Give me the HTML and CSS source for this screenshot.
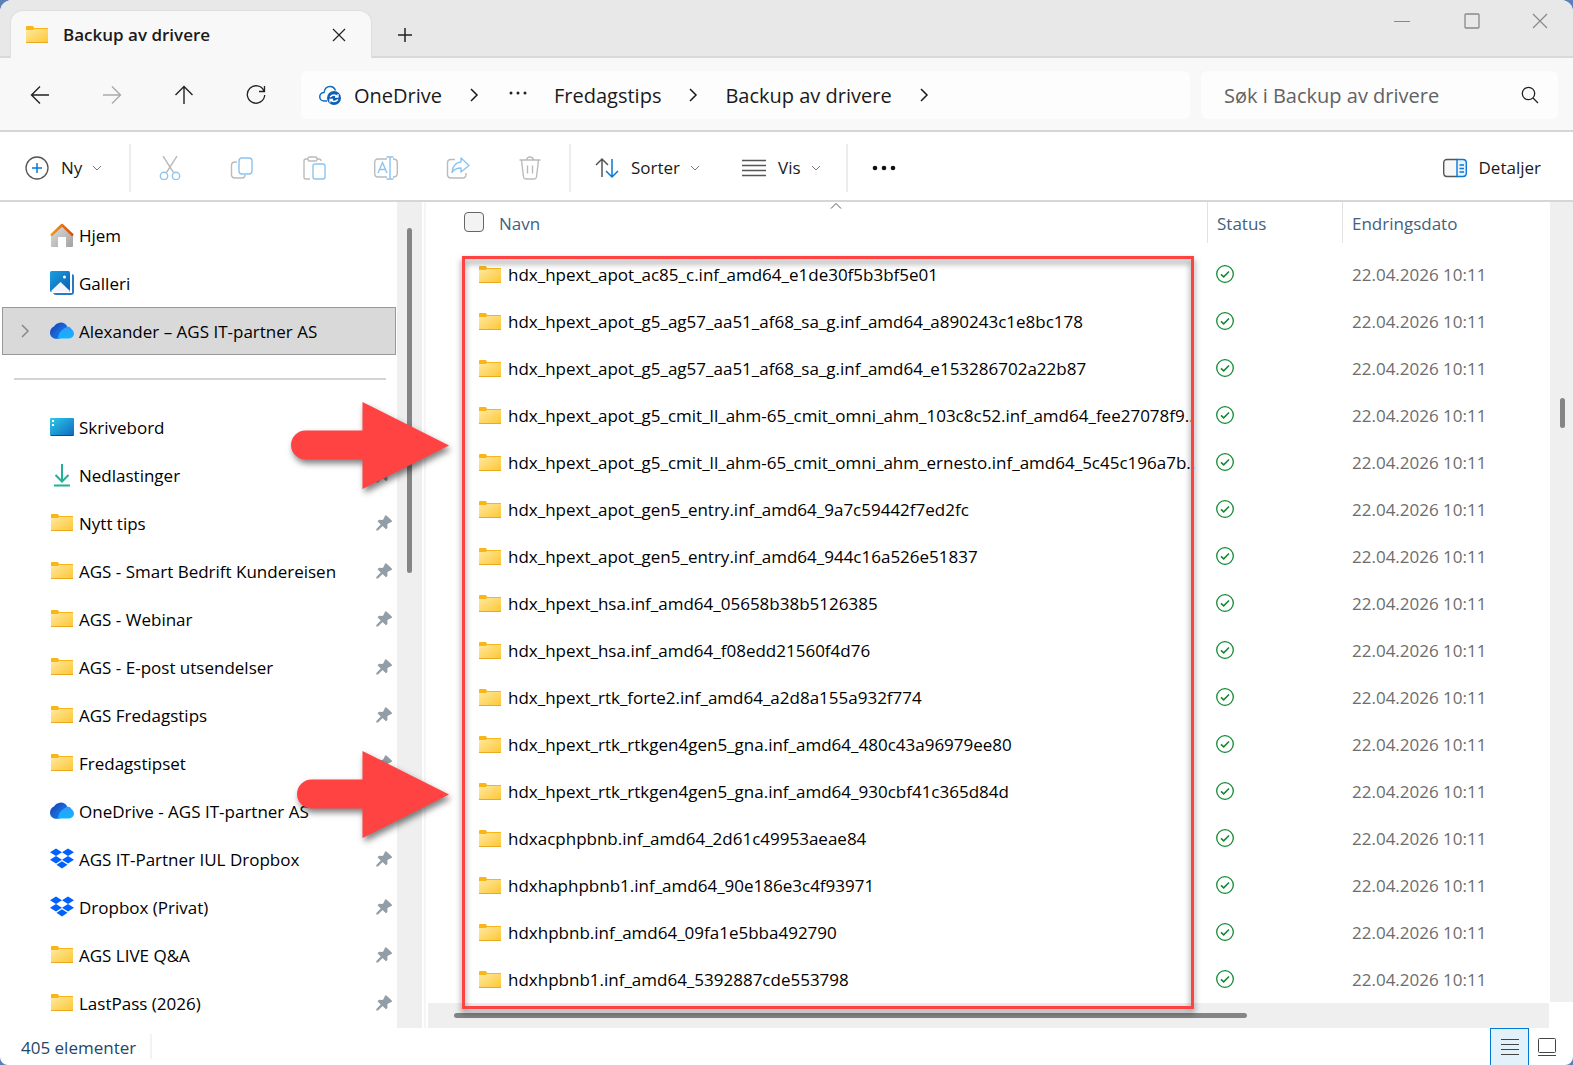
FILE: index.html
```html
<!DOCTYPE html>
<html lang="nb">
  <head>
    <meta charset="UTF-8" />
    <meta name="viewport" content="width=device-width, initial-scale=1.0" />
    <title>Backup av drivere</title>
    <link rel="stylesheet" href="styles.css">
  </head>
  <body>
    <!-- shared icons -->
    <svg class="sprite" aria-hidden="true">
      <defs>
        <linearGradient id="gFolder" x1="0" y1="0" x2="1" y2="1">
          <stop offset="0" stop-color="#ffe8a0" />
          <stop offset="1" stop-color="#fdc732" />
        </linearGradient>
        <linearGradient id="gBlue" x1="0" y1="0" x2="1" y2="1">
          <stop offset="0" stop-color="#1ba0e2" />
          <stop offset="1" stop-color="#0a5bb0" />
        </linearGradient>
        <linearGradient id="gDesk" x1="0" y1="0" x2="1" y2="1">
          <stop offset="0" stop-color="#30c9e8" />
          <stop offset="1" stop-color="#0c68c0" />
        </linearGradient>
        <linearGradient id="gHome" x1="0" y1="0" x2="1" y2="1">
          <stop offset="0" stop-color="#dedede" />
          <stop offset="1" stop-color="#a2a2a2" />
        </linearGradient>
        <linearGradient id="gRoof" x1="0" y1="0" x2="1" y2="0">
          <stop offset="0" stop-color="#f39a1c" />
          <stop offset="1" stop-color="#d84e0c" />
        </linearGradient>
        <linearGradient id="gCloud" x1="0" y1="0" x2="0" y2="1">
          <stop offset="0" stop-color="#2f9bf7" />
          <stop offset="1" stop-color="#12b4ff" />
        </linearGradient>
        <linearGradient id="gCloudDark" x1="0" y1="0" x2="1" y2="1">
          <stop offset="0" stop-color="#0d3fae" />
          <stop offset="1" stop-color="#2d86f5" />
        </linearGradient>
      </defs>
      <symbol id="folder" viewBox="0 0 24 24">
        <path fill="#f9b616" d="M1 4a1 1 0 0 1 1-1h6l1 2h14v2H1z" />
        <path fill="url(#gFolder)" d="M1 7h7l1-1h14v14H1z" />
        <path fill="#eba921" d="M1 19h22v1H1z" />
      </symbol>
      <symbol id="home" viewBox="0 0 24 24">
        <path fill="url(#gHome)" d="M1 12 12 3l11 9v11q0 1-1 1h-6v-10H8v10H2q-1 0-1-1z" />
        <path fill="none" stroke="url(#gRoof)" stroke-width="2.500" stroke-linejoin="round" d="M1 12.500 12 2l11 10.500" />
      </symbol>
      <symbol id="gallery" viewBox="0 0 24 24">
        <path fill="#2a78c8" d="M21 3q3 0 3 2v16q0 3-3 3H6q-2 0-3-2h17q1 0 1-1z" />
        <path fill="#fff" d="M20 2h2v20H2v-2h18z" />
        <rect width="20" height="21" rx="1.500" fill="url(#gBlue)" />
        <path fill="#f0f6ff" d="m1 20 9.500-9L20 20l-1 1H2z" />
        <circle cx="14.500" cy="6" r="1.500" fill="#fff" />
      </symbol>
      <symbol id="cloud" viewBox="0 0 24 24">
        <path fill="url(#gCloudDark)" d="M5 19.500A5.500 5.500 0 0 1 0 14Q0 9 4 7.500q2-3.500 7-4Q15 3.500 17 7L9 19.500z" />
        <path fill="#1768e0" d="M3.500 19Q5 12 11 8.500q4-2.500 7-.500L10 19.500H5z" />
        <path fill="url(#gCloud)" d="M8 19.500q0-6 6-10Q19 6 21.500 10q2.500 2 2.500 4.500a5 5 0 0 1-5 5z" />
      </symbol>
      <symbol id="desktop" viewBox="0 0 24 24">
        <rect y="3" width="24" height="18" rx="1" fill="url(#gDesk)" />
        <path fill="#fff" d="M2 5h2v2H2zM2 9h2v2H2z" />
        <path fill="#0a4a94" d="M1 20h22v1H1z" />
      </symbol>
      <symbol id="download" viewBox="0 0 24 24">
        <path fill="none" stroke="#22b096" stroke-width="2" d="M12 1v17M5.500 12l6.500 6.500 6.500-6.500M4 22.500h16" />
      </symbol>
      <symbol id="dropbox" viewBox="0 0 24 24">
        <path fill="#0061fe" d="M6 1.500l6 3.750L6 9 0 5.250zM18 1.500l6 3.750L18 9l-6-3.750zM6 9l6 3.750-6 3.750-6-3.750zM18 9l6 3.750-6 3.750-6-3.750zM12 14.200l5.500 3.600L12 21.500l-5.500-3.700z" />
      </symbol>
      <symbol id="pin" viewBox="0 0 16 16">
        <path fill="#929da6" d="M9 .7q.8-.9 1.700 0l4.800 4.600q.9.800 0 1.700l-3.300 1.500-.9 1 .2 3.500-1.500 1.300L6.500 11 2 15.500H.3V14l4.500-4.500L1.500 6.200 3 4.700l3.500.2 1-1z" />
      </symbol>
      <symbol id="chevdown" viewBox="0 0 10 10">
        <path fill="none" stroke="#777" stroke-width="1" d="m1 3 4 4 4-4" />
      </symbol>
      <symbol id="chevright" viewBox="0 0 10 14">
        <path fill="none" stroke="currentColor" stroke-width="1.500" d="m2 1 6 6-6 6" />
      </symbol>
      <symbol id="synced" viewBox="0 0 18 18">
        <circle cx="9" cy="9" r="8.300" fill="none" stroke="#128a33" stroke-width="1.300" />
        <path fill="none" stroke="#128a33" stroke-width="1.600" d="m5 9.300 2.700 2.600L13 6.500" />
      </symbol>
    </svg>

    <div class="window">
      <header class="titlebar">
        <div class="tab">
          <svg class="icon"><use href="#folder" /></svg>
          <span class="tab-title">Backup av drivere</span>
          <button class="plain" aria-label="Lukk fane">
            <svg width="14" height="14" fill="none" stroke="#222" stroke-width="1.200"><path d="m1 1 12 12M13 1 1 13" /></svg>
          </button>
        </div>
        <button class="plain new-tab" aria-label="Ny fane">
          <svg width="16" height="16" fill="none" stroke="#222" stroke-width="1.500"><path d="M8 1v14M1 8h14" /></svg>
        </button>
        <div class="window-buttons">
          <button class="plain" aria-label="Minimer">
            <svg width="16" height="16" fill="none" stroke="#888"><path d="M0 8.500h16" /></svg>
          </button>
          <button class="plain" aria-label="Maksimer">
            <svg width="16" height="16" fill="none" stroke="#888" stroke-width="1.300"><rect x="1" y="1" width="14" height="14" rx="1" /></svg>
          </button>
          <button class="plain" aria-label="Lukk">
            <svg width="16" height="16" fill="none" stroke="#888" stroke-width="1.200"><path d="m1 1 14 14M15 1 1 15" /></svg>
          </button>
        </div>
      </header>

      <nav class="navbar">
        <div class="nav-buttons">
          <button class="plain" aria-label="Tilbake">
            <svg width="20" height="20" fill="none" stroke="#222" stroke-width="1.400"><path d="M19 10H1.500M10 1.500 1.500 10l8.500 8.500" /></svg>
          </button>
          <button class="plain" aria-label="Frem" disabled>
            <svg width="20" height="20" fill="none" stroke="#aaa" stroke-width="1.400"><path d="M1 10h17.500M10 1.500l8.500 8.500-8.500 8.500" /></svg>
          </button>
          <button class="plain" aria-label="Opp">
            <svg width="20" height="20" fill="none" stroke="#222" stroke-width="1.400"><path d="M10 19V1.500M1.500 10 10 1.500l8.500 8.500" /></svg>
          </button>
          <button class="plain" aria-label="Oppdater">
            <svg width="20" height="20" fill="none" stroke="#222" stroke-width="1.300"><path d="M18 6a8.700 8.700 0 1 0 .7 4M18.500 1v5.500H13" /></svg>
          </button>
        </div>
        <div class="address">
          <svg class="onedrive" viewBox="0 0 24 20">
            <path fill="none" stroke="#0f6cbd" stroke-width="1.500" d="M8 16H5A4.200 4.200 0 0 1 5 7.500Q6 1.500 11 1.500q4 0 5.500 4" />
            <circle cx="15" cy="13" r="7" fill="#0f5fb8" />
            <path fill="none" stroke="#fff" stroke-width="1.300" d="M11 12q4-4 8 0m0-3v3h-3M19 14.500q-4 4-8 0m0 3v-3h3" />
          </svg>
          <a href="#">OneDrive</a>
          <svg class="crumb-sep"><use href="#chevright" /></svg>
          <button class="plain crumb-more" aria-label="Flere">
            <svg width="18" height="4" fill="#222"><circle cx="2" cy="2" r="1.500" /><circle cx="9" cy="2" r="1.500" /><circle cx="16" cy="2" r="1.500" /></svg>
          </button>
          <a href="#">Fredagstips</a>
          <svg class="crumb-sep"><use href="#chevright" /></svg>
          <a href="#">Backup av drivere</a>
          <svg class="crumb-sep"><use href="#chevright" /></svg>
        </div>
        <div class="search">
          <input type="text" placeholder="Søk i Backup av drivere" aria-label="Søk i Backup av drivere" />
          <svg width="18" height="18" fill="none" stroke="#222" stroke-width="1.300"><circle cx="7.500" cy="7.500" r="6.200" /><path d="m12 12 5 5" /></svg>
        </div>
      </nav>

      <div class="toolbar">
        <button class="tool tool-new">
          <svg class="icon" viewBox="0 0 24 24" fill="none"><circle cx="12" cy="12" r="11" stroke="#555" stroke-width="1.300" /><path stroke="#0a78d4" stroke-width="1.500" d="M12 7v10M7 12h10" /></svg>
          Ny
          <svg class="chev"><use href="#chevdown" /></svg>
        </button>
        <div class="tool-group">
          <button class="plain" aria-label="Klipp ut" disabled>
            <svg class="icon" viewBox="0 0 24 24" fill="none" stroke-width="1.400"><path stroke="#bbb" d="m5 0 10.500 16.500M19 0 8.500 16.500" /><g stroke="#8cc4f0"><circle cx="6" cy="20" r="3.700" /><circle cx="18" cy="20" r="3.700" /></g></svg>
          </button>
          <button class="plain" aria-label="Kopier" disabled>
            <svg class="icon" viewBox="0 0 24 24" fill="none" stroke-width="1.400"><path stroke="#bbb" d="M7 6H5Q1.500 6 1.500 9.500v9Q1.500 22 5 22h7q3 0 3-3" /><rect x="9" y="2" width="13" height="16" rx="3" stroke="#8cc4f0" /></svg>
          </button>
          <button class="plain" aria-label="Lim inn" disabled>
            <svg class="icon" viewBox="0 0 24 24" fill="none" stroke-width="1.400"><path stroke="#bbb" d="M8 23H4q-2 0-2-2V5q0-2 2-2h2M15 3h2q2 0 2 2" /><rect x="6" y="1" width="9" height="4" rx="1.500" stroke="#bbb" /><rect x="11" y="8" width="12" height="15" rx="2" stroke="#8cc4f0" /></svg>
          </button>
          <button class="plain" aria-label="Gi nytt navn" disabled>
            <svg class="icon" viewBox="0 0 24 24" fill="none" stroke-width="1.400"><path stroke="#bbb" d="M13 3H4Q.7 3 .7 6.500v11Q.7 21 4 21h9M19 3q4.300 0 4.300 3.500v11Q23.300 21 19 21" /><path stroke="#8cc4f0" d="M12.500 1h7M12.500 23h7M16 1v22M4 17l4.500-10.500L13 17M5.500 13.500h6" /></svg>
          </button>
          <button class="plain" aria-label="Del" disabled>
            <svg class="icon" viewBox="0 0 24 24" fill="none" stroke-width="1.400" stroke-linejoin="round"><path stroke="#bbb" d="M9 3.500H5Q1.500 3.500 1.500 7v11.500Q1.500 22 5 22h11.500Q20 22 20 18.500V17" /><path stroke="#8cc4f0" d="m15 2 8 7.500-8 6.500v-4q-6 0-9 4.500Q7 6.500 15 6z" /></svg>
          </button>
          <button class="plain" aria-label="Slett" disabled>
            <svg class="icon" viewBox="0 0 24 24" fill="none" stroke="#bbb" stroke-width="1.400"><path d="M1.500 4h21M8.500 4q.5-3 3.500-3t3.500 3M3.500 4l2 17q.3 2 2.300 2h8.400q2 0 2.300-2l2-17M9.500 9.500v8M14.500 9.500v8" /></svg>
          </button>
        </div>
        <button class="tool tool-sort">
          <svg class="icon" viewBox="0 0 24 24" fill="none" stroke-width="1.500"><path stroke="#555" d="M7 21V3M1 9l6-6 6 6" /><path stroke="#0a78d4" d="M17 3v18M11 15l6 6 6-6" /></svg>
          Sorter
          <svg class="chev"><use href="#chevdown" /></svg>
        </button>
        <button class="tool tool-view">
          <svg class="icon" viewBox="0 0 24 24" stroke="#555" stroke-width="1.400"><path d="M0 4.500h24M0 9.500h24M0 14.500h24M0 19.500h24" /></svg>
          Vis
          <svg class="chev"><use href="#chevdown" /></svg>
        </button>
        <button class="plain tool-more" aria-label="Vis mer">
          <svg class="icon" viewBox="0 0 24 24" fill="#111"><circle cx="3" cy="12" r="2.300" /><circle cx="12" cy="12" r="2.300" /><circle cx="21" cy="12" r="2.300" /></svg>
        </button>
        <button class="tool tool-details">
          <svg class="icon" viewBox="0 0 24 24" fill="none" stroke-width="1.400"><path stroke="#555" fill="#f7f7f7" d="M14 3.500H4Q.7 3.500 .7 7v10q0 3.500 3.300 3.500h10" /><path stroke="#0a78d4" fill="#e8f4fd" d="M14 3.500h6q3.300 0 3.300 3.500v10q0 3.500-3.300 3.500h-6zM16.500 9h4.500M16.500 12.500h4.500M16.500 16h4.500" /></svg>
          Detaljer
        </button>
      </div>

      <div class="main">
        <aside class="sidebar">
          <ul class="places">
            <li><svg class="icon"><use href="#home" /></svg><a href="#">Hjem</a></li>
            <li><svg class="icon"><use href="#gallery" /></svg><a href="#">Galleri</a></li>
            <li class="selected"><svg class="expand"><use href="#chevright" /></svg><svg class="icon"><use href="#cloud" /></svg><a href="#">Alexander – AGS IT-partner AS</a></li>
          </ul>
          <hr />
          <ul class="places">
            <li><svg class="icon"><use href="#desktop" /></svg><a href="#">Skrivebord</a><svg class="pin"><use href="#pin" /></svg></li>
            <li><svg class="icon"><use href="#download" /></svg><a href="#">Nedlastinger</a><svg class="pin"><use href="#pin" /></svg></li>
            <li><svg class="icon"><use href="#folder" /></svg><a href="#">Nytt tips</a><svg class="pin"><use href="#pin" /></svg></li>
            <li><svg class="icon"><use href="#folder" /></svg><a href="#">AGS - Smart Bedrift Kundereisen</a><svg class="pin"><use href="#pin" /></svg></li>
            <li><svg class="icon"><use href="#folder" /></svg><a href="#">AGS - Webinar</a><svg class="pin"><use href="#pin" /></svg></li>
            <li><svg class="icon"><use href="#folder" /></svg><a href="#">AGS - E-post utsendelser</a><svg class="pin"><use href="#pin" /></svg></li>
            <li><svg class="icon"><use href="#folder" /></svg><a href="#">AGS Fredagstips</a><svg class="pin"><use href="#pin" /></svg></li>
            <li><svg class="icon"><use href="#folder" /></svg><a href="#">Fredagstipset</a><svg class="pin"><use href="#pin" /></svg></li>
            <li><svg class="icon"><use href="#cloud" /></svg><a href="#">OneDrive - AGS IT-partner AS</a></li>
            <li><svg class="icon"><use href="#dropbox" /></svg><a href="#">AGS IT-Partner IUL Dropbox</a><svg class="pin"><use href="#pin" /></svg></li>
            <li><svg class="icon"><use href="#dropbox" /></svg><a href="#">Dropbox (Privat)</a><svg class="pin"><use href="#pin" /></svg></li>
            <li><svg class="icon"><use href="#folder" /></svg><a href="#">AGS LIVE Q&amp;A</a><svg class="pin"><use href="#pin" /></svg></li>
            <li><svg class="icon"><use href="#folder" /></svg><a href="#">LastPass (2026)</a><svg class="pin"><use href="#pin" /></svg></li>
          </ul>
        </aside>
        <div class="scroll-v side-scroll"><div class="thumb"></div></div>
        <div class="splitter"></div>

        <div class="files">
          <table>
            <colgroup>
              <col class="col-name" />
              <col class="col-status" />
              <col />
            </colgroup>
            <thead>
              <tr>
                <th>
                  <div class="head name-head">
                    <input type="checkbox" id="selectAll" />
                    <label for="selectAll">Navn</label>
                    <svg class="sort-mark" viewBox="0 0 12 6" fill="none" stroke="#555"><path d="m1 5.500 5-5 5 5" /></svg>
                  </div>
                </th>
                <th><div class="head">Status</div></th>
                <th><div class="head">Endringsdato</div></th>
              </tr>
            </thead>
            <tbody id="rows"></tbody>
          </table>
          <div class="scroll-h"><div class="thumb"></div></div>
          <div class="highlight"></div>
        </div>
        <div class="scroll-v file-scroll"><div class="thumb"></div></div>

        <svg class="arrow arrow-top" viewBox="0 0 158 88"><path fill="#ff4343" d="M14.500 29.500h57V1L158 44.500 71.500 88V58.500h-57a14.500 14.500 0 0 1 0-29z" /></svg>
        <svg class="arrow arrow-bottom" viewBox="0 0 158 88"><path fill="#ff4343" d="M20.500 29.500h51V1L158 44.500 71.500 88V58.500h-51a14.500 14.500 0 0 1 0-29z" /></svg>
      </div>

      <footer class="statusbar">
        <span class="count">405 elementer</span>
        <div class="view-buttons">
          <button class="active" aria-label="Detaljvisning">
            <svg width="18" height="18" stroke="#444"><path d="M0 1.500h18M0 6.500h18M0 11.500h18M0 16.500h18" /></svg>
          </button>
          <button aria-label="Store ikoner">
            <svg width="18" height="18" fill="none" stroke="#444"><rect x=".5" y=".5" width="17" height="14" rx="1" /><path d="M0 17.500h18" /></svg>
          </button>
        </div>
      </footer>
    </div>

    <script>
      const names = [
        "hdx_hpext_apot_ac85_c.inf_amd64_e1de30f5b3bf5e01",
        "hdx_hpext_apot_g5_ag57_aa51_af68_sa_g.inf_amd64_a890243c1e8bc178",
        "hdx_hpext_apot_g5_ag57_aa51_af68_sa_g.inf_amd64_e153286702a22b87",
        "hdx_hpext_apot_g5_cmit_ll_ahm-65_cmit_omni_ahm_103c8c52.inf_amd64_fee27078f9..",
        "hdx_hpext_apot_g5_cmit_ll_ahm-65_cmit_omni_ahm_ernesto.inf_amd64_5c45c196a7b..",
        "hdx_hpext_apot_gen5_entry.inf_amd64_9a7c59442f7ed2fc",
        "hdx_hpext_apot_gen5_entry.inf_amd64_944c16a526e51837",
        "hdx_hpext_hsa.inf_amd64_05658b38b5126385",
        "hdx_hpext_hsa.inf_amd64_f08edd21560f4d76",
        "hdx_hpext_rtk_forte2.inf_amd64_a2d8a155a932f774",
        "hdx_hpext_rtk_rtkgen4gen5_gna.inf_amd64_480c43a96979ee80",
        "hdx_hpext_rtk_rtkgen4gen5_gna.inf_amd64_930cbf41c365d84d",
        "hdxacphpbnb.inf_amd64_2d61c49953aeae84",
        "hdxhaphpbnb1.inf_amd64_90e186e3c4f93971",
        "hdxhpbnb.inf_amd64_09fa1e5bba492790",
        "hdxhpbnb1.inf_amd64_5392887cde553798",
      ];

      // All folders were copied at the same time, so the date is shared
      document.getElementById("rows").innerHTML = names
        .map(
          (name) => `<tr>
            <td><div class="name"><svg class="icon"><use href="#folder" /></svg><span>${name}</span></div></td>
            <td><svg class="synced"><use href="#synced" /></svg></td>
            <td class="date">22.04.2026 10:11</td>
          </tr>`
        )
        .join("");
    </script>
  </body>
</html>
```

FILE: styles.css
```css
* {
  box-sizing: border-box;
}
body {
  margin: 0;
  background-color: #5b7fb8;
  color: #1a1a1a;
  font-family: "Open Sans", "Noto Sans", sans-serif;
  font-size: 17px;
}
a {
  color: inherit;
  text-decoration: none;
}
button,
input {
  font: inherit;
  color: inherit;
}
svg {
  display: block;
  flex: none;
}
.sprite {
  position: absolute;
  width: 0;
  height: 0;
}
.icon {
  width: 24px;
  height: 24px;
}
.plain {
  display: flex;
  align-items: center;
  justify-content: center;
  padding: 0;
  border: none;
  background: none;
}
.window {
  display: flex;
  flex-direction: column;
  min-height: 100vh;
  background-color: #fff;
  border-radius: 12px 12px 8px 8px;
  overflow: hidden;
}

/* title bar */
.titlebar {
  display: flex;
  height: 58px;
  padding-left: 11px;
  background-color: #e8e8e8;
  box-shadow: inset 0 -2px #d9d9d9;
}
.tab {
  display: flex;
  align-items: center;
  width: 360px;
  margin-top: 11px;
  padding: 0 25px 0 14px;
  background-color: #f8f8f8;
  border-radius: 12px 12px 0 0;
  box-shadow: 0 0 1px 1px #dedede;
  clip-path: inset(-2px -2px 0 -2px);
}
.tab-title {
  flex: 1;
  margin-left: 14px;
  font-weight: 600;
}
.new-tab {
  width: 68px;
  padding-top: 11px;
}
.window-buttons {
  display: flex;
  height: 41px;
  margin-left: auto;
}
.window-buttons button {
  width: 70px;
}
.window-buttons button:last-child {
  width: 66px;
}

/* address row */
.navbar {
  display: flex;
  align-items: center;
  height: 74px;
  padding: 2px 15px 0 4px;
  background-color: #f8f8f8;
  border-bottom: 2px solid #d6d6d6;
}
.nav-buttons {
  display: flex;
  width: 297px;
}
.nav-buttons button {
  width: 72px;
  height: 48px;
}
.address {
  display: flex;
  flex: 1;
  align-items: center;
  height: 48px;
  padding-left: 18px;
  background-color: #fdfdfd;
  border-radius: 6px;
  font-size: 20px;
}
.onedrive {
  width: 24px;
  height: 20px;
  margin-right: 11px;
}
.crumb-sep {
  width: 10px;
  height: 14px;
  margin: 0 27px;
}
.crumb-more {
  margin: 0 27px 4px 3px;
}
.search {
  display: flex;
  align-items: center;
  width: 357px;
  height: 48px;
  margin-left: 11px;
  padding: 0 19px 0 23px;
  background-color: #fdfdfd;
  border-radius: 6px;
}
.search input {
  flex: 1;
  min-width: 0;
  padding: 0;
  border: none;
  outline: none;
  background: none;
  font-size: 20px;
}
.search input::placeholder {
  color: #626262;
  opacity: 1;
}

/* command bar */
.toolbar {
  display: flex;
  align-items: center;
  height: 70px;
  padding: 3px 32px 0 25px;
  border-bottom: 2px solid #d6d6d6;
}
.tool {
  display: flex;
  align-items: center;
  gap: 12px;
  height: 48px;
  padding: 0;
  border: none;
  background: none;
}
.chev {
  width: 10px;
  height: 10px;
  margin-left: -2px;
}
.tool-new {
  width: 104px;
}
.tool-group {
  display: flex;
  height: 48px;
  padding: 0 3px;
  border: solid #ececec;
  border-width: 0 2px;
}
.tool-group button {
  width: 72px;
}
.tool-sort {
  margin-left: 24px;
}
.tool-view {
  margin-left: 42px;
  padding-right: 25px;
  border-right: 2px solid #ececec;
}
.tool-more {
  margin-left: 24px;
}
.tool-details {
  margin-left: auto;
}

/* content */
.main {
  position: relative;
  display: flex;
  flex: 1;
}
.sidebar {
  width: 397px;
  padding: 9px 1px 0 2px;
  color: #000;
}
.places {
  margin: 0;
  padding: 0;
  list-style: none;
}
.places li {
  display: flex;
  align-items: center;
  gap: 5px;
  height: 48px;
  padding: 0 4px 0 48px;
}
.places .selected {
  padding-left: 17px;
  background-color: #d9d9d9;
  border: 1px solid #999;
}
.expand {
  width: 10px;
  height: 14px;
  margin-right: 15px;
  color: #888;
}
.pin {
  width: 16px;
  height: 16px;
  margin-left: auto;
}
.sidebar hr {
  height: 2px;
  margin: 23px 10px 23px 12px;
  border: none;
  background-color: #d4d4d4;
}
.scroll-v {
  background-color: #efefef;
}
.scroll-v .thumb {
  width: 5px;
  border-radius: 3px;
  background-color: #858585;
}
.side-scroll {
  width: 25px;
  padding: 26px 0 0 10px;
}
.side-scroll .thumb {
  height: 345px;
}
.splitter {
  width: 2px;
  margin: 0 2px;
  background-color: #f5f5f5;
}
.files {
  position: relative;
  flex: 1;
  min-width: 0;
}
table {
  width: 100%;
  table-layout: fixed;
  border-collapse: collapse;
}
.col-name {
  width: 780px;
}
.col-status {
  width: 135px;
}
th {
  height: 49px;
  padding: 0;
  vertical-align: top;
  text-align: left;
  font-weight: 400;
  color: #44607e;
}
.head {
  display: flex;
  align-items: center;
  height: 41px;
  padding: 1px 0 0 9px;
  border-right: 1px solid #e2e2e2;
}
th:last-child .head {
  border-right: none;
}
.name-head {
  position: relative;
  gap: 15px;
  padding-left: 36px;
}
.name-head input {
  appearance: none;
  width: 20px;
  height: 20px;
  margin: 0 0 2px;
  border: 1px solid #666;
  border-radius: 4px;
  background-color: #f3f3f3;
}
.sort-mark {
  position: absolute;
  top: 1px;
  left: 402px;
  width: 12px;
  height: 6px;
}
td {
  height: 47px;
  padding: 0 0 0 8px;
  white-space: nowrap;
}
td:first-child {
  padding-left: 50px;
}
.name {
  display: flex;
  align-items: center;
  gap: 6px;
  color: #000;
}
.synced {
  width: 18px;
  height: 18px;
  margin-bottom: 2px;
}
.date {
  padding-left: 9px;
  color: #6d6d6d;
}
.scroll-h {
  height: 25px;
  padding: 10px 0 0 26px;
  background-color: #efefef;
}
.scroll-h .thumb {
  width: 793px;
  height: 5px;
  border-radius: 3px;
  background-color: #858585;
}
.file-scroll {
  width: 23px;
  margin: 0 0 26px 1px;
  padding: 196px 0 0 10px;
}
.file-scroll .thumb {
  height: 30px;
}

/* annotations drawn on top of the list */
.highlight {
  position: absolute;
  top: 54px;
  bottom: 19px;
  left: 34px;
  width: 732px;
  border: 3px solid #ff4343;
  filter: drop-shadow(0 4px 3px rgba(0, 0, 0, 0.5));
  pointer-events: none;
}
.arrow {
  position: absolute;
  left: 291px;
  width: 158px;
  height: 88px;
  filter: drop-shadow(2px 4px 3px rgba(0, 0, 0, 0.5));
  pointer-events: none;
}
.arrow-top {
  top: 199px;
}
.arrow-bottom {
  top: 548px;
}

/* status bar */
.statusbar {
  display: flex;
  align-items: center;
  height: 37px;
  padding-left: 21px;
  color: #24466b;
}
.count {
  padding: 2px 14px 0 0;
  border-right: 2px solid #f3f3f3;
}
.view-buttons {
  display: flex;
  height: 37px;
  margin-left: auto;
  padding-right: 8px;
}
.view-buttons button {
  display: flex;
  align-items: center;
  justify-content: center;
  width: 36px;
  padding: 0;
  border: none;
  background: none;
}
.view-buttons .active {
  width: 39px;
  border: 1px solid #0078d4;
  border-bottom: none;
  background-color: #e3f1fb;
}
```
